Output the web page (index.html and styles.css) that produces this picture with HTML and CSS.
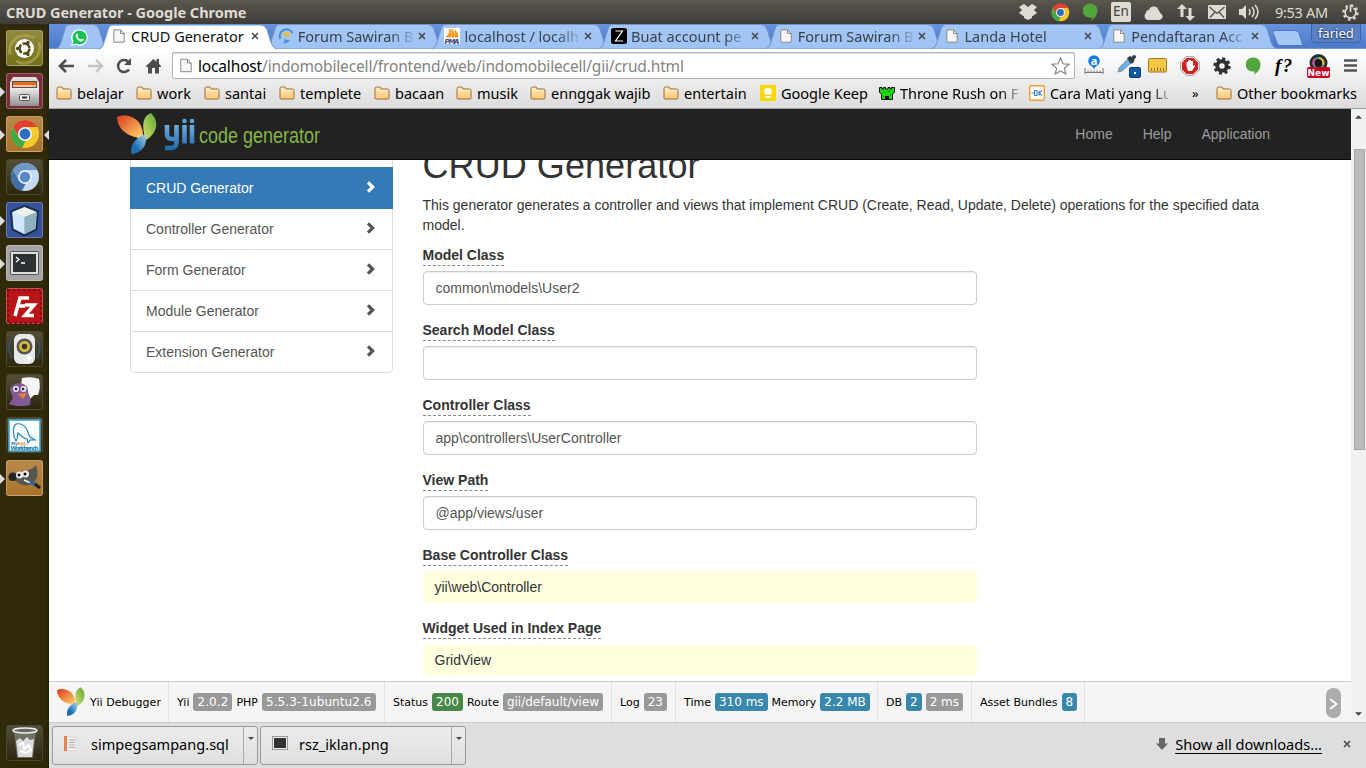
FILE: index.html
```html
<!DOCTYPE html>
<html lang="en">
<head>
<meta charset="utf-8">
<title>CRUD Generator</title>
<link rel="stylesheet" href="styles.css">
</head>
<body>
<svg class="defs" width="0" height="0">
  <defs>
    <linearGradient id="gFolder" x1="0" y1="0" x2="0" y2="1"><stop offset="0" stop-color="#ffe9ba"/><stop offset="1" stop-color="#fcc878"/></linearGradient>
    <linearGradient id="gTab" x1="0" y1="0" x2="0" y2="1"><stop offset="0" stop-color="#a5c6f3"/><stop offset="1" stop-color="#9dc3f5"/></linearGradient>
    <linearGradient id="gOrange" x1="0" y1="0" x2="1" y2="1"><stop offset="0" stop-color="#d93a1c"/><stop offset=".5" stop-color="#ee8a45"/><stop offset="1" stop-color="#fde06c"/></linearGradient>
    <linearGradient id="gGreen" x1="1" y1="0" x2="0" y2="1"><stop offset="0" stop-color="#62a637"/><stop offset="1" stop-color="#d3e26a"/></linearGradient>
    <linearGradient id="gBlue" x1="1" y1="0" x2="0" y2="1"><stop offset="0" stop-color="#a6d3ee"/><stop offset=".7" stop-color="#1c6cb0"/><stop offset="1" stop-color="#2275b8"/></linearGradient>
    <linearGradient id="gYii" gradientUnits="userSpaceOnUse" x1="0" y1="8" x2="0" y2="38"><stop offset="0" stop-color="#7dbbe8"/><stop offset="1" stop-color="#1d66ab"/></linearGradient>
    <linearGradient id="gSilver" x1="0" y1="0" x2="0" y2="1"><stop offset="0" stop-color="#eee"/><stop offset="1" stop-color="#909090"/></linearGradient>
    <symbol id="folder" viewBox="0 0 16 14"><path d="M1 12V2.500Q1 1 2.500 1H6Q7 1 7 3H13.500Q15 3 15 4.500V12Q15 13 14 13H2Q1 13 1 12Z" fill="url(#gFolder)" stroke="#9c6d3b"/><path d="M2 4.500H14" stroke="#fff1cd"/></symbol>
    <symbol id="page" viewBox="0 0 12 14"><path d="M.8.800H7.500L11.200 4.500V13.200H.8Z" fill="#f7f7f7" stroke="#888"/><path d="M7.500.800V4.500H11.200" fill="none" stroke="#888"/></symbol>
    <symbol id="cross" viewBox="0 0 8 8"><path d="M1 1L7 7M7 1L1 7" stroke="#444" stroke-width="1.500"/></symbol>
    <symbol id="shape" viewBox="0 0 178 25"><path d="M0 24.500C3 24 4 21 5 18L9 5Q10 .5 14 .5H162Q166 .5 168 5L172 18C173 21 175 24 178 24.500" stroke="#6f94cc"/></symbol>
    <symbol id="chrome" viewBox="0 0 30 30"><circle cx="15" cy="15" r="14" fill="#f5c92c"/><path d="M2.900 8A14 14 0 0 1 27.200 8H15L9 18Z" fill="#e0402f"/><path d="M2.900 8L9 18.500L15.500 22L12 29A14 14 0 0 1 2.900 8Z" fill="#45a845"/><circle cx="15" cy="15" r="7" fill="#f4f4f4"/><circle cx="15" cy="15" r="5.400" fill="#2b6fbd"/></symbol>
    <symbol id="hang" viewBox="0 0 15 18"><path d="M7.500.500A7 7 0 0 1 14.500 7.500Q14.500 13.500 8.500 17.500V14.200A7 7 0 1 1 7.500.500Z" fill="#53a53f"/></symbol>
    <symbol id="yii" viewBox="0 0 40 42"><path d="M0 4C9 0 25 4 26 21V26C17 24 1 21 0 4Z" fill="url(#gOrange)"/><path d="M34 0C43 9 40 20 29 27C26 19 23 4 34 0Z" fill="url(#gGreen)"/><path d="M28 21C31 29 27 40 14.500 41C13 32 17 26 28 21Z" fill="url(#gBlue)"/></symbol>
    <symbol id="chev" viewBox="0 0 10 12"><path d="M2 1.300L6.700 6L2 10.700" fill="none" stroke="currentColor" stroke-width="3.200"/></symbol>
    <symbol id="caret" viewBox="0 0 8 4"><path d="M0 4L4 0L8 4Z"/></symbol>
  </defs>
</svg>

<header class="topbar">
  <div class="wintitle">CRUD Generator - Google Chrome</div>
  <div class="indicators">
    <svg width="18" height="16" viewBox="0 0 18 16"><path d="M5 0L9 3L13 0L18 3L15 6L18 9L13 12.500V14L9 16L5 14V12.500L0 9L3 6L0 3Z" fill="#dfdbd2"/></svg>
    <svg width="19" height="19"><use href="#chrome"/></svg>
    <svg width="15" height="18"><use href="#hang"/></svg>
    <span class="lang">En</span>
    <svg width="19" height="15" viewBox="0 0 19 15"><path d="M4 15A4 4 0 0 1 2 8Q2 5 5 5A5 5 0 0 1 14.500 5Q16 8 17.500 9A3.500 3.500 0 0 1 15 15Z" fill="#dfdbd2"/></svg>
    <svg width="18" height="17" viewBox="0 0 18 17"><path d="M3.500 13V5H0L5 0L10 5H6.500V13ZM11.500 4V12H8.500L13 17L18 12H14.500V4Z" fill="#dfdbd2"/></svg>
    <svg width="18" height="14" viewBox="0 0 18 14"><rect width="18" height="14" rx="1" fill="#dfdbd2"/><path d="M1.500 2L9 8.500L16.500 2M2 12.500L7 7M16 12.500L11 7" fill="none" stroke="#4b4a45" stroke-width="1.200"/></svg>
    <svg width="21" height="16" viewBox="0 0 21 16"><path d="M0 5H3L7 1V15L3 11H0Z" fill="#dfdbd2"/><path d="M10 5Q12 8 10 11M13 3Q17 8 13 13M16 1Q22 8 16 15" fill="none" stroke="#dfdbd2" stroke-width="1.500"/></svg>
    <span class="clock">9:53 AM</span>
    <svg width="17" height="17" viewBox="0 0 17 17" fill="none" stroke="#dfdbd2"><circle cx="8.500" cy="8.500" r="7" stroke-width="2.400" stroke-dasharray="2.500 3"/><path d="M5.500 4A5.400 5.400 0 1 0 11.500 4M8.500 1V8" stroke-width="1.700"/></svg>
  </div>
</header>

<div class="desktop">
<nav class="launcher">
  <div class="tile olive"><svg width="37" height="37" viewBox="0 0 37 37"><path d="M4 25C1 9 17 1 28 8M33 12C37 27 22 38 10 31" fill="none" stroke="#b9b268" stroke-width="3" opacity=".55"/><circle cx="18.500" cy="18.500" r="9.500" fill="#fff"/><circle cx="18.500" cy="18.500" r="5" fill="none" stroke="#514b12" stroke-width="2.600" stroke-dasharray="8.900 1.600"/><g fill="#514b12"><circle cx="11.500" cy="18.500" r="1.700"/><circle cx="22" cy="12.500" r="1.700"/><circle cx="22" cy="24.500" r="1.700"/></g></svg></div>
  <div class="tile wine run"><svg width="37" height="37" viewBox="0 0 37 37"><path d="M7 4H30L33 9V33H4V9Z" fill="#ddd"/><path d="M6 8H31V16H6Z" fill="#57504c"/><path d="M7 9H30V12H7Z" fill="#e96b1d"/><path d="M7 12H30V14H7Z" fill="#fac69a"/><path d="M4 15H33V33H4Z" fill="url(#gSilver)"/><rect x="13.500" y="21.500" width="10" height="6" rx="1" fill="#eee" stroke="#555"/><path d="M16 24.500H21" stroke="#333" stroke-width="2"/></svg></div>
  <div class="tile gold run focus"><svg width="30" height="30"><use href="#chrome"/></svg></div>
  <div class="tile dark"><svg width="30" height="30" viewBox="0 0 30 30"><circle cx="15" cy="15" r="14" fill="#c6daf0"/><path d="M2.900 8A14 14 0 0 1 27.200 8H15L9 18Z" fill="#6d98c8"/><path d="M2.900 8L9 18.500L15.500 22L12 29A14 14 0 0 1 2.900 8Z" fill="#416fa5"/><circle cx="15" cy="15" r="7" fill="#e5eef8"/><circle cx="15" cy="15" r="5.200" fill="#5789c2"/></svg></div>
  <div class="tile blue run"><svg width="33" height="33" viewBox="0 0 33 33"><path d="M16.500 2L30 7.500L28.500 25.500L16.500 31.500L4.500 25.500L3 7.500Z" fill="#a9c5d9" stroke="#1c2d54" stroke-width="2"/><path d="M4.500 8L16.500 13V30L6 24.500Z" fill="#d5e7ff"/><path d="M16.500 3L28.500 8L16.500 13L4.500 8Z" fill="#edf3e9"/><path d="M16.500 13L28.500 8L27 24.500L16.500 30Z" fill="#8fb1be"/></svg></div>
  <div class="tile grey run"><svg width="29" height="25" viewBox="0 0 29 25"><rect x=".5" y=".5" width="28" height="23" rx="1" fill="#ddd" stroke="#555"/><rect x="3" y="3" width="23" height="18" fill="#2d3133"/><path d="M6 6L9 8.500L6 11M11 12H15" fill="none" stroke="#fff" stroke-width="1.300"/></svg></div>
  <div class="tile red"><svg width="37" height="37" viewBox="0 0 37 37"><rect x="2" y="2" width="33" height="33" fill="none" stroke="#7d0d11" stroke-width="2" stroke-dasharray="2.500 2.500"/><path d="M9 28L14 10H23M12 18H19M19 17H28L19 27.500H28" fill="none" stroke="#fff" stroke-width="3.600"/></svg></div>
  <div class="tile dark"><svg width="37" height="37" viewBox="0 0 37 37"><path d="M4 9Q1 17 6 27M32 9Q36 17 31 27" fill="none" stroke="#33506b" stroke-width="2"/><rect x="8" y="3" width="21" height="30" rx="6" fill="#e8e8e8"/><circle cx="18.500" cy="15.500" r="8" fill="#555"/><circle cx="18.500" cy="15.500" r="5.500" fill="#d4b83b"/><circle cx="18.500" cy="15.500" r="2.700" fill="#353535"/><circle cx="23" cy="27" r="2.500" fill="#fff"/></svg></div>
  <div class="tile dark"><svg width="37" height="37" viewBox="0 0 37 37"><path d="M16 4Q26 2 33 5Q35 14 32 21H28L24 25L23 21Q13 14 16 4Z" fill="#f5f5f5"/><path d="M4 16C5 7 22 7 22 17C22 22 26 26 24 31C18 33 7 32 3 30L7 24Z" fill="#815a96"/><circle cx="10" cy="15" r="3" fill="#e9e0ef"/><circle cx="17.500" cy="15" r="3" fill="#e9e0ef"/><circle cx="10" cy="15" r="1.300" fill="#35213f"/><circle cx="17" cy="15" r="1.300" fill="#35213f"/><path d="M12 20L21 19L17 25Z" fill="#ee8427"/></svg></div>
  <div class="tile dark"><svg width="33" height="33" viewBox="0 0 33 33"><rect x="1" y="1" width="31" height="31" fill="#f8fbfd" stroke="#43a8d5" stroke-width="1.600"/><path d="M8 22C5 17 4 8 8 5C12 4 15 5 18 9C20 12 20 15 22 18L27 21L22 21L20 24L19 20C15 19 12 16 10 14C9 17 10 20 8 22Z" fill="none" stroke="#1680b4" stroke-width="1.100"/><text x="3" y="26" class="wbmy">My<tspan fill="#e88b1a">SQL</tspan></text><text x="2.500" y="30.500" textLength="28" class="wb">Workbench</text></svg></div>
  <div class="tile gold run"><svg width="37" height="37" viewBox="0 0 37 37"><path d="M5 12L11 13Q20 12 27 8L30 5Q34 17 27 23Q19 29 10 21L3 19Z" fill="#575552"/><circle cx="6.500" cy="17" r="4" fill="#24252a"/><circle cx="13.500" cy="15" r="3.500" fill="#eee"/><circle cx="19.500" cy="14" r="3.500" fill="#eee"/><circle cx="13" cy="15" r="1.500"/><circle cx="19" cy="14" r="1.500"/><path d="M18 20L29 25" stroke="#eee" stroke-width="1.600"/><path d="M24 22L30 25" stroke="#2a62a0" stroke-width="3.500"/><path d="M29 24L34 28" stroke="#222" stroke-width="3"/></svg></div>
  <div class="tile dark trash"><svg width="28" height="32" viewBox="0 0 28 32"><path d="M3 4L6 31H22L25 4Z" fill="#aaa" opacity=".45"/><ellipse cx="14" cy="3.500" rx="12" ry="2.500" fill="#666" stroke="#eee" stroke-width="1.500"/><path d="M5 14L9 11L12 14L16 10L19 13L23 12L22 21L21 30H7L6 21Z" fill="#ddd"/><path d="M8 18L12 16L13 22L18 18L20 23L15 26L9 24" fill="none" stroke="#fff" stroke-width="2"/></svg></div>
</nav>

<main class="browser">
  <div class="tabstrip">
    <div class="pin"><svg class="pinshape" width="52" height="25" viewBox="0 0 52 25"><path d="M0 24.500C3 24 4 21 5 18L9 5Q10 .5 14 .5H37Q41 .5 43 5L47 18C48 21 50 24 52 24.500" fill="url(#gTab)" stroke="#6f94cc"/></svg><svg class="wa" width="17" height="17" viewBox="0 0 17 17"><path d="M0 17L1.300 12.500A8.200 8.200 0 1 1 4.600 15.700Z" fill="#fff"/><path d="M1.500 15.500L2.500 12A7 7 0 1 1 5 14.500Z" fill="#15c350"/><path d="M6 4.200L7.300 6.800L6.600 7.800Q7.500 9.800 9.700 10.600L10.800 9.500L13 10.600Q12.500 13 9.500 12.400Q5.300 11 4.600 7Q4.600 5 6 4.200Z" fill="#fff"/></svg></div>
    <div class="tab on"><svg class="shape"><use href="#shape"/></svg><svg class="fav pg"><use href="#page"/></svg><span>CRUD Generator</span><svg class="x"><use href="#cross"/></svg></div>
    <div class="tab"><svg class="shape"><use href="#shape"/></svg><svg class="fav" viewBox="0 0 16 16"><path d="M2.500 11A6.300 6.300 0 1 1 14.500 5" fill="none" stroke="#4a8ed0" stroke-width="2"/><path d="M5 8A3.500 3.500 0 0 1 12 7L13 9L9 8Z" fill="#edbd3c"/><path d="M6 12L10 13L6 15" fill="none" stroke="#4391d7" stroke-width="1.800"/></svg><span>Forum Sawiran B</span><svg class="x"><use href="#cross"/></svg></div>
    <div class="tab"><svg class="shape"><use href="#shape"/></svg><svg class="fav" viewBox="0 0 16 16"><path d="M0 0H16V16H0Z" fill="#fff"/><path d="M2 9Q6 7 6 1L7 9ZM8 9L8 1Q10 4 10 9ZM11 9V2Q14 5 14 9Z" fill="#f59a12" stroke="#f59a12"/><text x=".5" y="15.500" textLength="15" class="pma">PMA</text></svg><span>localhost / localh</span><svg class="x"><use href="#cross"/></svg></div>
    <div class="tab"><svg class="shape"><use href="#shape"/></svg><svg class="fav" viewBox="0 0 16 16"><rect width="16" height="16" rx="2.500"/><path d="M4.500 3H11.500L4.500 13H12" fill="none" stroke="#fff" stroke-width="1.200"/></svg><span>Buat account pe</span><svg class="x"><use href="#cross"/></svg></div>
    <div class="tab"><svg class="shape"><use href="#shape"/></svg><svg class="fav pg"><use href="#page"/></svg><span>Forum Sawiran B</span><svg class="x"><use href="#cross"/></svg></div>
    <div class="tab"><svg class="shape"><use href="#shape"/></svg><svg class="fav pg"><use href="#page"/></svg><span>Landa Hotel</span><svg class="x"><use href="#cross"/></svg></div>
    <div class="tab"><svg class="shape"><use href="#shape"/></svg><svg class="fav pg"><use href="#page"/></svg><span>Pendaftaran Acc</span><svg class="x"><use href="#cross"/></svg></div>
    <svg class="newtab" width="32" height="16" viewBox="0 0 32 16"><path d="M2 .5H23Q26 .5 27 3L31 15.500H8Q6 15.500 5 13L.8 2.500Q.5 .5 2 .5Z" fill="#a5c7f5" stroke="#5079bd"/></svg>
    <div class="profile">faried</div>
  </div>

  <div class="toolbar">
    <div class="navbtns">
      <svg width="17" height="14" viewBox="0 0 17 14"><path d="M16 7H2.500M8 1L2 7L8 13" fill="none" stroke="#4d4d4d" stroke-width="2.600"/></svg>
      <svg width="17" height="14" viewBox="0 0 17 14"><path d="M1 7H14.500M9 1L15 7L9 13" fill="none" stroke="#c4c4c4" stroke-width="2.400"/></svg>
      <svg width="16" height="16" viewBox="0 0 16 16"><path d="M13 11.500A6 6 0 1 1 12.500 4" fill="none" stroke="#4d4d4d" stroke-width="2.500"/><path d="M15 0V7H8Z" fill="#4d4d4d"/></svg>
      <svg width="15" height="16" viewBox="0 0 15 16"><path d="M0 8L7.500 1L10.500 3.800V1H13V6L15 8V9H13V15.500H9V10H6V15.500H2V9H0Z" fill="#4d4d4d"/></svg>
    </div>
    <div class="omnibox"><svg width="12" height="15"><use href="#page"/></svg><div class="url"><b>localhost</b>/indomobilecell/frontend/web/indomobilecell/gii/crud.html</div>
      <svg width="19" height="18" viewBox="0 0 19 18"><path d="M9.500 1L12 6.800L18 7.300L13.400 11.200L14.800 17L9.500 14L4.200 17L5.600 11.200L1 7.300L7 6.800Z" fill="#fff" stroke="#888" stroke-width="1.200"/></svg></div>
    <div class="exts">
      <svg width="20" height="21" viewBox="0 0 20 21"><circle cx="10" cy="6" r="5.800" fill="#1679e8"/><text x="10" y="9.500" text-anchor="middle" class="exta">a</text><path d="M8 11L10 14L12 11Z" fill="#1679e8"/><path d="M1 13V19M19 13V19M1 17.500H19M4 15.500V18M7 15.500V18M10 15.500V18M13 15.500V18M16 15.500V18" stroke="#777"/></svg>
      <svg width="24" height="24" viewBox="0 0 24 24"><path d="M11 5L14.500 8.500L5 17L1 18L2 14Z" fill="#6ab1e8" stroke="#7e91a0"/><path d="M10 4L13 2L15 3Q16 0 18.500 1.500Q20 3 17.500 5L17 8L14 10Z" fill="#343b43"/><rect x="12.500" y="13.500" width="11" height="10" rx="1.500" fill="#125ba0" stroke="#073e77"/><rect x="17" y="18" width="2" height="2" fill="#fff"/></svg>
      <svg width="20" height="16" viewBox="0 0 20 16"><rect x=".5" y=".5" width="18" height="13.500" rx="1" fill="#f3c646" stroke="#9e7b25"/><path d="M3.500 13V10M6.500 13V10M9.500 13V9M12.500 13V10M15.500 13V10" stroke="#9a7622"/></svg>
      <svg width="20" height="20" viewBox="0 0 20 20"><path d="M6 .7H14L19.300 6V14L14 19.300H6L.7 14V6Z" fill="#fff" stroke="#999"/><path d="M6.500 2H13.500L18 6.500V13.500L13.500 18H6.500L2 13.500V6.500Z" fill="#d32020"/><path d="M6.500 10V6H8V4.500H9.500V4H11V5H13V10L14.500 9L15 10L12 15H8Z" fill="#fff"/></svg>
      <svg width="18" height="18" viewBox="0 0 18 18"><circle cx="9" cy="9" r="7.200" fill="none" stroke="#303030" stroke-width="3" stroke-dasharray="3 2.650"/><circle cx="9" cy="9" r="4.700" fill="none" stroke="#303030" stroke-width="4"/></svg>
      <svg width="15" height="18"><use href="#hang"/></svg>
      <span class="fq">f?</span>
      <svg width="23" height="24" viewBox="0 0 23 24"><circle cx="11.500" cy="9" r="9" fill="#292d31"/><circle cx="11.500" cy="9" r="5" fill="#161616" stroke="#25a9a4" stroke-width="2"/><path d="M7 11A5 5 0 0 1 8 5" stroke="#e04a85" stroke-width="2" fill="none"/><path d="M12 4A5 5 0 0 1 16 11" stroke="#f2bf27" stroke-width="2" fill="none"/><rect y="13" width="23" height="11" rx="2" fill="#c9001f"/><text x="11.500" y="22" text-anchor="middle" class="new">New</text></svg>
      <svg width="13" height="13" viewBox="0 0 13 13"><path d="M0 1.500H13M0 6.500H13M0 11.500H13" stroke="#555" stroke-width="2.600"/></svg>
    </div>
  </div>

  <div class="bookmarks">
    <div><svg><use href="#folder"/></svg><span>belajar</span></div>
    <div><svg><use href="#folder"/></svg><span>work</span></div>
    <div><svg><use href="#folder"/></svg><span>santai</span></div>
    <div><svg><use href="#folder"/></svg><span>templete</span></div>
    <div><svg><use href="#folder"/></svg><span>bacaan</span></div>
    <div><svg><use href="#folder"/></svg><span>musik</span></div>
    <div><svg><use href="#folder"/></svg><span>ennggak wajib</span></div>
    <div><svg><use href="#folder"/></svg><span>entertain</span></div>
    <div><svg viewBox="0 0 16 16"><path d="M0 0H16V16H0Z" fill="#f6d900"/><path d="M8 2.500A4 4 0 0 1 10.500 9.500V13H5.500V9.500A4 4 0 0 1 8 2.500Z" fill="#fff"/><path d="M5.500 10.500H10.500" stroke="#e3c000"/></svg><span>Google Keep</span></div>
    <div><svg viewBox="0 0 16 16"><path d="M.5 2.500H3V4H4.500V2.500H6.500V4H9V2.500H11V4H12.500V2.500H15.500V7.500L13.500 9V14.500H2.500V9L.5 7.500Z" fill="#20d510" stroke="#111"/><path d="M6 14V11H10V14Z" fill="#111"/><path d="M5 7.500H7M9 6.500H11M4 11.500H5M11 10.500H12" stroke="#0a780a"/></svg><span class="fade">Throne Rush on F</span></div>
    <div><svg viewBox="0 0 16 16"><rect x=".7" y=".7" width="14.600" height="14.600" rx="1" fill="#fff" stroke="#f39a32" stroke-width="1.400"/><path d="M2.500 8H5M5.500 5.500H8V10.500H5.500ZM13 5.500L10 8L13 10.500M10 5.500V10.500" fill="none" stroke="#4387c5" stroke-width="1.100"/></svg><span class="fade">Cara Mati yang Lu</span></div>
    <div class="more">»</div>
    <div><svg><use href="#folder"/></svg><span>Other bookmarks</span></div>
  </div>

  <div class="viewport">
    <div class="page">
      <div class="navbar"><div class="container">
        <div class="brand"><svg width="215" height="46" viewBox="0 0 215 46"><svg x="2" y="1" width="40" height="42"><use href="#yii"/></svg><g fill="none" stroke="url(#gYii)" stroke-width="4.600"><path d="M52 13V22Q52 27 57 27H61M61.500 13V30Q61.500 36 56 36H50M69.500 13V31.500M77 13V31.500"/></g><g fill="#5ba5dc"><circle cx="69.500" cy="9" r="2.300"/><circle cx="77" cy="9" r="2.300"/></g><text x="84" y="31" textLength="121" lengthAdjust="spacingAndGlyphs" class="codegen">code generator</text></svg></div>
        <div class="links"><a>Home</a><a>Help</a><a>Application</a></div>
      </div></div>
      <div class="container body">
        <div class="list">
          <a></a>
          <a class="active">CRUD Generator<svg><use href="#chev"/></svg></a>
          <a>Controller Generator<svg><use href="#chev"/></svg></a>
          <a>Form Generator<svg><use href="#chev"/></svg></a>
          <a>Module Generator<svg><use href="#chev"/></svg></a>
          <a>Extension Generator<svg><use href="#chev"/></svg></a>
        </div>
        <div class="content">
          <h1>CRUD Generator</h1>
          <p>This generator generates a controller and views that implement CRUD (Create, Read, Update, Delete) operations for the specified data model.</p>
          <div class="field"><label>Model Class</label><input value="common\models\User2"></div>
          <div class="field"><label>Search Model Class</label><input></div>
          <div class="field"><label>Controller Class</label><input value="app\controllers\UserController"></div>
          <div class="field"><label>View Path</label><input value="@app/views/user"></div>
          <div class="field"><label>Base Controller Class</label><div class="sticky">yii\web\Controller</div></div>
          <div class="field"><label>Widget Used in Index Page</label><div class="sticky">GridView</div></div>
        </div>
      </div>
      <div class="debug">
        <div><svg width="28" height="30"><use href="#yii"/></svg>Yii Debugger</div>
        <div>Yii <i>2.0.2</i> PHP <i>5.5.3-1ubuntu2.6</i></div>
        <div>Status <i class="ok">200</i> Route <i>gii/default/view</i></div>
        <div>Log <i>23</i></div>
        <div>Time <i class="info">310 ms</i> Memory <i class="info">2.2 MB</i></div>
        <div>DB <i class="info">2</i> <i>2 ms</i></div>
        <div>Asset Bundles <i class="info">8</i></div>
        <svg class="toggle" width="15" height="30" viewBox="0 0 15 30"><rect width="15" height="30" rx="7" fill="#acacac"/><path d="M4 11L10.500 16L4 21" fill="none" stroke="#fff" stroke-width="1.800"/></svg>
      </div>
    </div>
    <div class="scroll"><svg class="up" width="7" height="4"><use href="#caret"/></svg><div class="thumb"></div><svg class="down" width="7" height="4"><use href="#caret"/></svg></div>
  </div>

  <div class="downloads">
    <div class="dl"><svg width="13" height="15" viewBox="0 0 13 15"><path d="M0 0H10L13 3V15H0Z" fill="#eee" stroke="#bbb" stroke-width=".6"/><path d="M0 0H3V15H0Z" fill="#e88350"/><path d="M5 4H11M5 6.500H11M5 9H11M5 11.500H11" stroke="#aaa"/></svg><span>simpegsampang.sql</span><em><svg class="drop" width="6" height="3"><use href="#caret"/></svg></em></div>
    <div class="dl"><svg width="16" height="15" viewBox="0 0 16 15"><rect x=".5" y=".5" width="15" height="13" fill="#eee" stroke="#999"/><rect x="2" y="2" width="12" height="10" fill="#333"/></svg><span class="png">rsz_iklan.png</span><em><svg class="drop" width="6" height="3"><use href="#caret"/></svg></em></div>
    <div class="all"><svg width="12" height="12" viewBox="0 0 12 12"><path d="M3 0H9V5.500H12L6 12L0 5.500H3Z" fill="#666"/></svg><a>Show all downloads...</a><svg class="x"><use href="#cross"/></svg></div>
  </div>
</main>
</div>
</body>
</html>
```

FILE: styles.css
```css
* { box-sizing: border-box; }
body { margin: 0; width: 1366px; height: 768px; overflow: hidden; display: flex; flex-direction: column; font-family: "Noto Sans", sans-serif; font-size: 15px; color: #000; background: #fff; }
svg { display: block; flex: none; }
.defs { position: absolute; }

.topbar { height: 24px; flex: none; display: flex; justify-content: space-between; align-items: center; background: linear-gradient(#5a574e, #3e3d39); }
.wintitle { padding-left: 6px; color: #dfdbd2; font-weight: 700; font-size: 14.500px; line-height: 24px; letter-spacing: -.04px; white-space: nowrap; }
.indicators { width: 347px; display: grid; grid-template-columns: 32px 32px 28px 33px 33px 31px 31px 36px 67px 24px; align-items: center; color: #dfdbd2; }
.lang { width: 20px; height: 20px; line-height: 19px; text-align: center; background: #dfdbd2; color: #403f3a; border-radius: 2px; font-size: 13.500px; }
.clock { font-size: 14.500px; letter-spacing: -.3px; line-height: 20px; padding-bottom: 1px; white-space: nowrap; }

.desktop { display: flex; height: 744px; }
.launcher { width: 49px; flex: none; padding: 6px 0 7px 6px; display: flex; flex-direction: column; gap: 7px; background: linear-gradient(90deg, #302a0b 46px, #221f0d); }
.tile { position: relative; width: 37px; height: 36px; flex: none; display: flex; align-items: center; justify-content: center; border-radius: 3px; border: 1px solid rgba(255,255,255,.25); }
.tile > svg { margin: -1px; }
.olive { background: linear-gradient(#918a3b, #756e18); }
.wine { background: #7b2d3a; }
.gold { background: linear-gradient(#b8894a, #a97328); }
.dark { background: linear-gradient(#524e38, #2c270e); border-color: #4c482f; }
.blue { background: #365399; }
.grey { background: #a4a4a4; }
.red { background: #b91418; }
.run::before { content: ""; position: absolute; left: -7px; top: 13px; border: 5px solid transparent; border-left-color: #ddd; border-right: 0; }
.focus::after { content: ""; position: absolute; right: -7px; top: 13px; border: 5px solid transparent; border-right-color: #ddd; border-left: 0; }
.trash { margin-top: auto; }
.wb { font: bold 5.500px "DejaVu Sans", sans-serif; fill: #1b7aaa; }
.wbmy { font: bold 4px "DejaVu Sans", sans-serif; fill: #1b7aaa; }
.pma { font: italic bold 7px "DejaVu Sans", sans-serif; fill: #43437c; }

.browser { width: 1317px; display: flex; flex-direction: column; }
.tabstrip { height: 25px; flex: none; display: flex; background: linear-gradient(#6793dd, #4b79cb); border-bottom: 1px solid #7498cc; padding-left: 8px; }
.pin { position: relative; width: 45px; flex: none; padding: 5px 0 0 14px; }
.pinshape { position: absolute; left: -1px; top: 0; }
.wa { position: relative; }
.tab { position: relative; width: 166.700px; flex: none; display: flex; align-items: center; padding-left: 9px; color: #3b424c; }
.tab .shape { position: absolute; left: -3px; top: 0; width: 178px; height: 25px; fill: url(#gTab); }
.tab.on { z-index: 2; color: #111; }
.tab.on .shape { fill: #fff; height: 26px; }
.fav { position: relative; width: 16px; height: 16px; }
.fav.pg { width: 12px; height: 14px; margin: 0 2px; }
.tab span { position: relative; margin-left: 4px; width: 115px; height: 23px; line-height: 23px; overflow: hidden; white-space: nowrap; font-size: 14.500px; }
.tab:not(.on) span { -webkit-mask-image: linear-gradient(90deg, #000 80%, transparent 104%); mask-image: linear-gradient(90deg, #000 80%, transparent 104%); }
.x { position: relative; width: 8px; height: 8px; }
.tab .x { margin-left: 5px; }
.newtab { margin: 6px 0 0 3px; }
.profile { margin-left: 7px; width: 50px; height: 19px; line-height: 18px; text-align: center; font-size: 13px; color: #fff; background: #5980c3; border: 1px solid #3b64a8; border-top: 0; border-radius: 0 0 4px 4px; text-shadow: 0 0 2px #1a2f55, 0 1px 1px #223b66; }

.toolbar { height: 33px; flex: none; display: flex; align-items: center; padding-left: 9px; background: linear-gradient(#fff, #ececec); }
.navbtns { display: grid; grid-template-columns: 29px 29px 30px 26px; align-items: center; }
.omnibox { width: 903px; height: 27px; display: flex; align-items: center; padding: 0 4px 0 7px; border: 1px solid #b5b5b5; border-radius: 2px; background: #fff; box-shadow: inset 0 1px 1px #ddd; }
.url { flex: 1; margin-left: 6px; color: #848484; font-size: 15.500px; line-height: 24px; letter-spacing: -.16px; white-space: nowrap; }
.url b { color: #000; font-weight: 400; }
.exts { margin-left: 9px; display: grid; grid-template-columns: 33px 31px 32px 33px 33px 29px 32px 37px 13px; align-items: center; }
.exts svg { overflow: visible; }
.exta { font: bold 11px "Noto Sans", sans-serif; fill: #fff; }
.new { font: bold 9px "DejaVu Sans", sans-serif; fill: #fff; }
.fq { font: italic bold 19px/22px "Liberation Serif", serif; letter-spacing: 1.500px; }

.bookmarks { height: 27px; flex: none; display: grid; grid-template-columns: 80px 68px 75px 95px 82px 74px 133px 97px 119px 150px 162px 25px 142px; padding-left: 7px; background: linear-gradient(#ececec, #dcdcdc); border-bottom: 1px solid #a0a0a0; }
.bookmarks div { display: flex; align-items: center; white-space: nowrap; font-size: 14.500px; line-height: 22px; padding-bottom: 4px; min-width: 0; }
.bookmarks svg { width: 16px; height: 16px; margin-right: 5px; }
.bookmarks .more { font-size: 13px; padding-left: 1px; }
.fade { width: 118px; overflow: hidden; -webkit-mask-image: linear-gradient(90deg, #000 85%, transparent 105%); mask-image: linear-gradient(90deg, #000 85%, transparent 105%); letter-spacing: -.05px; }

.viewport { height: 613px; flex: none; display: flex; font: 14px/20px "Liberation Sans", Arial, sans-serif; color: #333; }
.page { position: relative; width: 1302px; height: 613px; overflow: hidden; background: #fff; }
.container { width: 1170px; margin: 0 auto; }
.navbar { position: absolute; z-index: 3; left: 0; top: 0; width: 1302px; height: 51px; background: #222; border-bottom: 1px solid #080808; }
.navbar .container { display: flex; justify-content: space-between; }
.brand { padding-top: 3px; }
.codegen { font: 22.500px "Liberation Sans", sans-serif; fill: #86b348; }
.links { display: flex; gap: 30px; padding: 15px 15px 0 0; color: #9d9d9d; }
.body { display: flex; gap: 30px; padding: 17px 15px 0; }
.list { width: 262.500px; flex: none; }
.list a { display: flex; justify-content: space-between; height: 42px; margin-bottom: -1px; padding: 10px 16px 10px 15px; border: 1px solid #ddd; color: #555; }
.list a.active { position: relative; background: #337ab7; border-color: #337ab7; color: #fff; }
.list a:last-child { border-radius: 0 0 4px 4px; }
.list svg { width: 10px; height: 12px; margin-top: 3px; }
.content { width: 847.500px; padding-top: 20px; }
h1 { margin: 0 0 9.400px; font-size: 36px; line-height: 39.600px; font-weight: 500; letter-spacing: .07px; }
.content p { margin: 0 0 10px; }
.field { width: 554.500px; margin-bottom: 15px; display: flex; flex-direction: column; align-items: flex-start; }
label { height: 21px; margin-bottom: 5px; font-weight: 700; border-bottom: 1px dashed #888; }
input { width: 100%; height: 34px; padding: 6px 12px; border: 1px solid #ccc; border-radius: 4px; font: inherit; color: #555; box-shadow: inset 0 1px 1px rgba(0,0,0,.075); }
.sticky { width: 100%; height: 32px; padding: 6px 12px; background: #ffffe0; border-radius: 4px; }
.debug { position: absolute; z-index: 4; left: 0; bottom: 0; width: 1302px; height: 41px; display: grid; grid-template-columns: 120px 216px 227px 64px 202px 94px 113px 1fr; align-items: stretch; background: #f5f5f5; border-top: 1px solid #ccc; font: 11px "DejaVu Sans", sans-serif; color: #000; }
.debug div { display: flex; align-items: center; gap: 4px; padding-left: 8px; border-right: 1px solid #e2e2e2; white-space: nowrap; }
.debug div:first-child { gap: 5px; letter-spacing: .05px; }
.debug i { font: 12px/18px "DejaVu Sans", sans-serif; padding: 0 4px; border-radius: 3px; color: #fff; background: #999; }
.debug div:nth-child(2) i { letter-spacing: .08px; }
.debug .ok { background: #468847; }
.debug .info { background: #3a87ad; }
.toggle { margin: 6px 10px 0 auto; }
.scroll { width: 15px; display: flex; flex-direction: column; align-items: center; background: #f1f1f1; fill: #444; }
.up { margin-top: 6px; }
.thumb { width: 11px; height: 301px; margin: 30px 0 auto 1px; background: #bababa; border: 1px solid #a5a5a5; }
.down { margin-bottom: 6px; transform: rotate(180deg); }

.downloads { height: 46px; flex: none; display: flex; padding: 3px 0 3px 3px; gap: 2px; background: #dedede; border-top: 1px solid #ccc; }
.dl { width: 206px; height: 39px; display: flex; align-items: center; padding-left: 11px; border: 1px solid #999; border-radius: 3px; background: linear-gradient(#ececec, #dfdfdf); }
.dl span { margin-left: 14px; padding-bottom: 4px; font-size: 14.500px; letter-spacing: .03px; }
.dl .png { margin-left: 11px; }
.dl svg { margin-top: -4px; }
.dl em { margin-left: auto; width: 14px; height: 37px; padding: 14px 0 0 4px; border-left: 1px solid #aaa; fill: #444; }
.dl .drop { transform: rotate(180deg); }
.all { margin: 0 15px 0 auto; padding-bottom: 3px; display: flex; align-items: center; }
.all a { margin: 0 21px 0 7px; text-decoration: underline; text-underline-offset: 3px; white-space: nowrap; font-size: 14.600px; }
```
